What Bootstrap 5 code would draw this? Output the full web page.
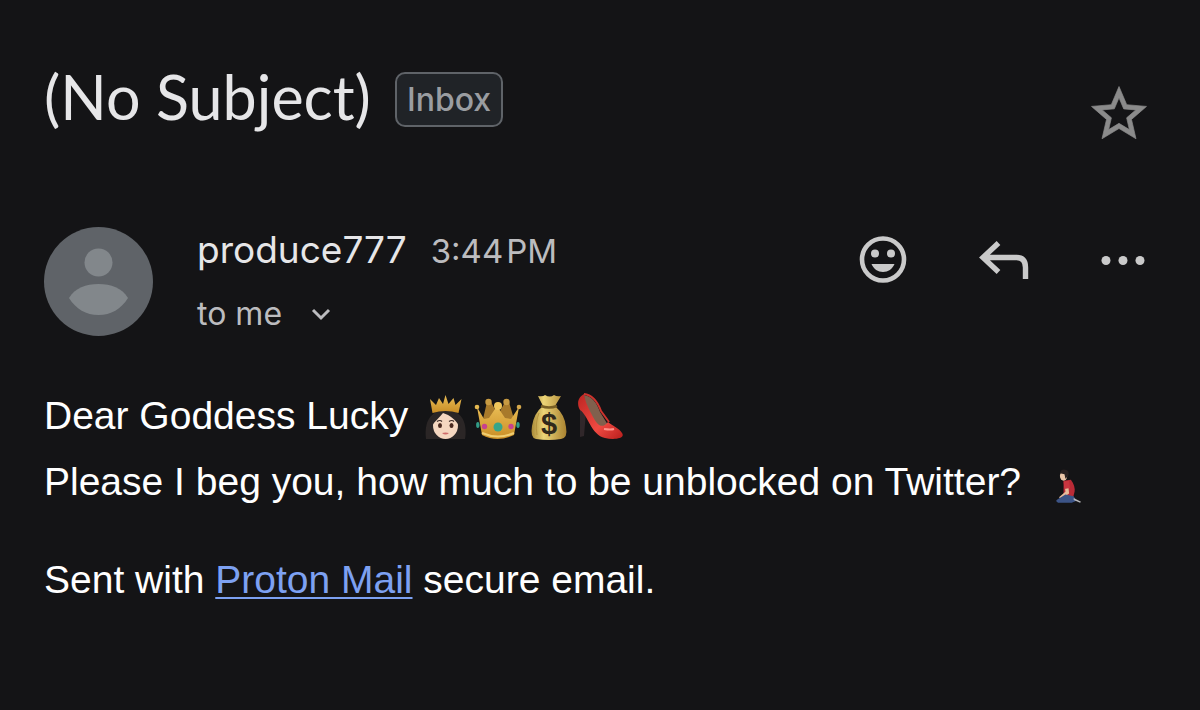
<!DOCTYPE html>
<html lang="en">
<head>
<meta charset="utf-8">
<meta name="viewport" content="width=device-width, initial-scale=1">
<title>(No Subject)</title>
<link href="https://cdn.jsdelivr.net/npm/bootstrap@5.3.0/dist/css/bootstrap.min.css" rel="stylesheet">
<style>
  body { background: #141416; color: #fff; font-family: "Liberation Sans", Arial, sans-serif; }
  .mail { padding: 63px 44px; }
  .subject { font: 400 61px/68px Lato, sans-serif; color: #e6e6e8; }
  .folder { font: 500 32px/51px Inter, sans-serif; color: #9a9da1; background: #202327; border: 2px solid #5f6368; border-radius: 10px; padding: 0 10px; margin-top: 9px; }
  .icon-btn { width: 64px; height: 66px; padding: 0; border: 0; background: none; color: #cacaca; flex: none; }
  .icon-btn svg { display: block; }
  .star-btn { color: #8b8b8b; width: 66px; margin-top: 18px; }
  .sender-row { margin-top: 80px; gap: 44px; }
  .actions { gap: 56px; }
  .sender { font-family: Inter, sans-serif; }
  .sender-name { font-size: 37px; line-height: 46px; color: #e6e6e8; }
  .sent-time { font-size: 33px; line-height: 46px; color: #bcbcbf; }
  .recipient { font-size: 32px; line-height: 40px; color: #bcbcbf; background: none; border: 0; padding: 0; gap: 28px; margin-top: 20px; }
  .message { font-size: 39px; line-height: 66px; margin-top: 47px; }
  .message p { margin: 0; }
  .message .signature { margin-top: 32px; }
  .message a { color: #7da1f2; text-decoration-thickness: 2px; text-underline-offset: 4px; }
  .emoji { width: 48px; height: 48px; }
  .emoji-set { margin-left: 4px; vertical-align: -12px; gap: 3px; }
  .emoji-end { width: 44px; height: 44px; margin-left: 16px; vertical-align: -15px; }
</style>
</head>
<body>
<main class="mail">
  <header class="d-flex justify-content-between align-items-start">
    <div class="d-flex align-items-start gap-4">
      <h1 class="subject m-0">(No Subject)</h1>
      <span class="folder">Inbox</span>
    </div>
    <button type="button" class="icon-btn star-btn me-1" aria-label="Star">
      <svg width="66" height="66" viewBox="0 0 24 24" fill="currentColor" stroke="currentColor" stroke-width=".25"><path d="M22 9.24l-7.19-.62L12 2 9.19 8.63 2 9.24l5.46 4.73L5.82 21 12 17.27 18.18 21l-1.63-7.03L22 9.24zM12 15.4l-3.76 2.27 1-4.28-3.32-2.88 4.38-.38L12 6.1l1.71 4.04 4.38.38-3.32 2.88 1 4.28L12 15.4z"/></svg>
    </button>
  </header>

  <section class="sender-row d-flex align-items-start">
    <svg class="flex-shrink-0" width="109" height="109" viewBox="0 0 109 109" aria-hidden="true">
      <circle cx="54.500" cy="54.500" r="54.500" fill="#5f6368"/>
      <circle cx="54.500" cy="35.500" r="14" fill="#82878b"/>
      <path d="M25 71C31 61 42 57 54.500 57S78 61 84 71C77 82 67 88 54.500 88S32 82 25 71Z" fill="#82878b"/>
    </svg>
    <div class="sender flex-grow-1">
      <div class="d-flex align-items-baseline gap-4">
        <span class="sender-name">produce777</span>
        <time class="sent-time">3:44&#8202;PM</time>
      </div>
      <button type="button" class="recipient d-flex align-items-center">
        <span>to me</span>
        <svg width="22" height="22" viewBox="0 0 22 22" fill="none" stroke="currentColor" stroke-width="3"><path d="M3 7l8 8 8-8"/></svg>
      </button>
    </div>
    <div class="actions d-flex">
      <button type="button" class="icon-btn" aria-label="Add reaction">
        <svg width="64" height="66" viewBox="1 0 64 66" fill="currentColor"><circle cx="32" cy="32.500" r="21" fill="none" stroke="currentColor" stroke-width="4.600"/><circle cx="24" cy="26.500" r="4"/><circle cx="40" cy="26.500" r="4"/><path d="M20.500 37h23c-2 5-6.500 8-11.500 8s-9.500-3-11.500-8Z"/></svg>
      </button>
      <button type="button" class="icon-btn" aria-label="Reply">
        <svg width="64" height="66" viewBox="1 0 64 66" fill="none" stroke="currentColor" stroke-width="5.400"><path d="M27.500 16L12 30.500 27.500 45M12.500 30.500h33q9 0 9 10V52"/></svg>
      </button>
      <button type="button" class="icon-btn" aria-label="More options">
        <svg width="64" height="66" viewBox="1 0 64 66" fill="currentColor"><circle cx="15" cy="33.500" r="4.500"/><circle cx="32" cy="33.500" r="4.500"/><circle cx="49" cy="33.500" r="4.500"/></svg>
      </button>
    </div>
  </section>

  <article class="message">
    <p>Dear Goddess Lucky
      <span class="emoji-set d-inline-flex"><svg class="emoji" viewBox="2 0 48 48" role="img" aria-label="Princess">
        <defs>
          <linearGradient id="gold" x2="0" y2="1"><stop stop-color="#e9bd55"/><stop offset="1" stop-color="#c98d25"/></linearGradient>
          <linearGradient id="sack" x2="1"><stop stop-color="#a98a38"/><stop offset=".35" stop-color="#edd577"/><stop offset="1" stop-color="#a98230"/></linearGradient>
          <linearGradient id="shoe" x2="1" y2="1"><stop stop-color="#bd2522"/><stop offset=".6" stop-color="#f04a42"/><stop offset="1" stop-color="#b81e1c"/></linearGradient>
        </defs>
        <path d="M5 46C3 29 9 18 24 17s23 11 20 29Z" fill="#2b2626"/>
        <ellipse cx="24.500" cy="32.500" rx="12.500" ry="13.500" fill="#f5d7c0"/>
        <path d="M10 34C14 28 19 24 22 20c7 2 13 7 17 14 1-9-4-16-15-16S9 25 10 34Z" fill="#2b2626"/>
        <path d="M9 6l6 6 3-7 4 6 2.500-9 3 9 5-6 2 7 6-6-3 14q-13-4-26 0Z" fill="url(#gold)"/>
        <path d="M16 28.500q3-2 5 0M28 28.500q3-2 5 0" stroke="#3a2925" fill="none" stroke-width="1.200"/>
        <ellipse cx="19" cy="32.500" rx="2" ry="2.500" fill="#49291f"/><ellipse cx="30.500" cy="32.500" rx="2" ry="2.500" fill="#49291f"/>
        <path d="M21 40q3.500 3 7 0-3.500-1-7 0Z" fill="#cf6c6b"/>
      </svg><svg class="emoji" viewBox="0 0 48 48" role="img" aria-label="Crown">
        <path d="M9 26L13 9h4l7 13 7-13h4l5 17Z" fill="#a87a2b"/><circle cx="14.500" cy="9" r="3.200" fill="#c79a42"/><circle cx="32.500" cy="9" r="3.200" fill="#c79a42"/>
        <path d="M3 14l7 12 5-1 8-12 8 12 6 1 8-12-5 28q-17 8-32 0Z" fill="url(#gold)"/>
        <circle cx="3" cy="14" r="2.300" fill="#e5b951"/><circle cx="24" cy="13" r="4" fill="#efc65b"/><circle cx="45" cy="14" r="2.300" fill="#d5a84c"/>
        <path d="M8 40q16 7 32 0" fill="none" stroke="#f0cd70" stroke-width="2"/>
        <circle cx="24" cy="34" r="4.500" fill="#36a58a"/><circle cx="10.500" cy="33.500" r="2.700" fill="#c8418d"/><circle cx="37" cy="33.500" r="2.700" fill="#c8418d"/><ellipse cx="3.800" cy="32" rx="1.700" ry="3" fill="#329c86"/><ellipse cx="44" cy="32" rx="1.700" ry="3" fill="#329c86"/>
      </svg><svg class="emoji" viewBox="0 0 48 48" role="img" aria-label="Money bag">
        <path d="M18 13L13 3q5 1 7-1 5 3 9 0 3 2 7 1l-6 10Q40 22 41 34q2 11-5 12-12 2-25 0-6-1-4-13Q9 20 18 13Z" fill="url(#sack)"/>
        <path d="M16 13q8 3 16 0" fill="none" stroke="#796025" stroke-width="2.500"/>
        <path d="M14 20q-4 9-2 22M35 20q3 9 1 22" fill="none" stroke="#b59440"/>
        <text x="24" y="41" text-anchor="middle" font-family="Liberation Sans, sans-serif" font-size="29" font-weight="700" fill="#30291b">$</text>
      </svg><svg class="emoji" viewBox="0 0 48 48" role="img" aria-label="High-heeled shoe">
        <path d="M4 11l6 8-2 24-4 1Z" fill="#30272a"/>
        <path d="M8 2q11 2 16 17l8 13-7 4Q8 24 8 2Z" fill="#80604d"/>
        <path d="M8 1C1 5 1 12 4 17c8 5 11 25 25 28 8 2 21 1 17-5-3-5-9-7-14-11-6 7-10 4-15-5C13 16 9 9 8 1Z" fill="url(#shoe)"/>
        <path d="M8 1q11 1 17 17l8 11" fill="none" stroke="#ce332d" stroke-width="2"/>
        <path d="M28 36q7 1 10 0" fill="none" stroke="#ff9188" stroke-width="2"/>
      </svg></span></p>
    <p>Please I beg you, how much to be unblocked on Twitter?
      <svg class="emoji-end" viewBox="0 0 48 48" role="img" aria-label="Person kneeling">
        <path d="M17 16l8-1q5 7 4 13l-2 8-10-3Z" fill="#b92b36"/><path d="M18 19l4 1 1 10-9 6-2-2 7-6Z" fill="#e7bc9c"/><path d="M17 17l6-1 1 8-6 1Z" fill="#c83540"/>
        <ellipse cx="17" cy="11" rx="4" ry="5" fill="#ecc6a9"/><path d="M13 8q1-5 6-4 5 1 3 7l-3 3-1-5Z" fill="#292020"/>
        <path d="M19 31l9 2 3 5-5 2H11q-4-2 0-4Z" fill="#3c5487"/><path d="M28 35l8 4-1 1-7-3Z" fill="#b9b9bb"/>
      </svg></p>
    <p class="signature">Sent with <a href="#">Proton Mail</a> secure email.</p>
  </article>
</main>
<script src="https://cdn.jsdelivr.net/npm/bootstrap@5.3.0/dist/js/bootstrap.bundle.min.js"></script>
</body>
</html>
